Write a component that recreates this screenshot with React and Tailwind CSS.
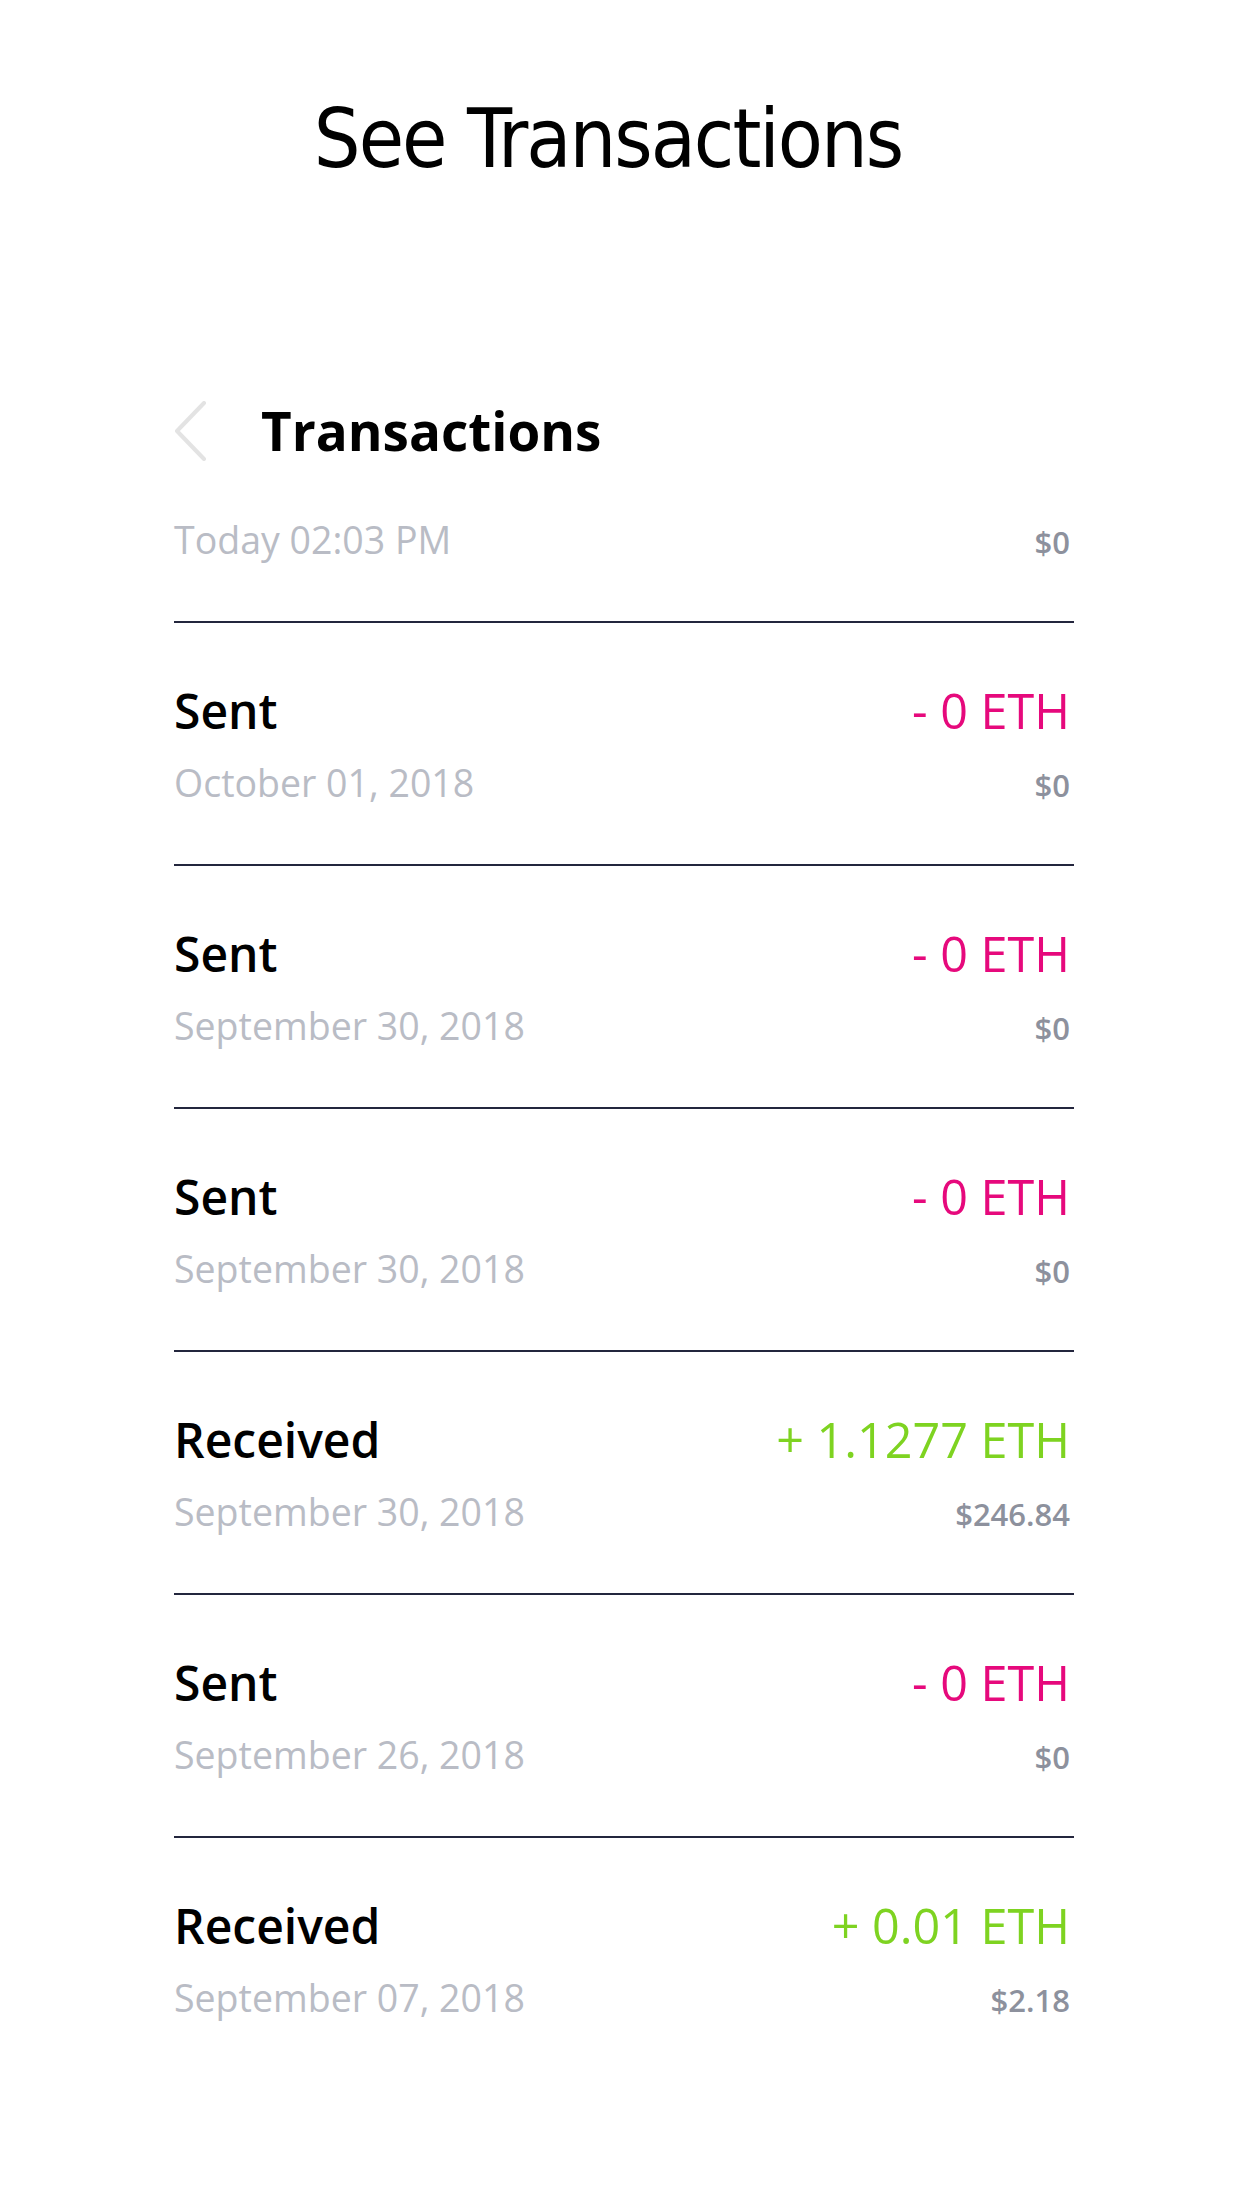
import React from "react";

const rows = [
  { title: "Sent", date: "October 01, 2018", amount: "- 0 ETH", usd: "$0", type: "sent" },
  { title: "Sent", date: "September 30, 2018", amount: "- 0 ETH", usd: "$0", type: "sent" },
  { title: "Sent", date: "September 30, 2018", amount: "- 0 ETH", usd: "$0", type: "sent" },
  { title: "Received", date: "September 30, 2018", amount: "+ 1.1277 ETH", usd: "$246.84", type: "recv" },
  { title: "Sent", date: "September 26, 2018", amount: "- 0 ETH", usd: "$0", type: "sent" },
  { title: "Received", date: "September 07, 2018", amount: "+ 0.01 ETH", usd: "$2.18", type: "recv", last: true },
];

function DateLine({ date, usd }) {
  return (
    <div className="flex items-baseline justify-between h-[46px] leading-[46px]">
      <span className="text-[37.5px] text-[#b9bcc5]">{date}</span>
      <span className="text-[31px] font-semibold text-[#8d919d] pr-[4px]">{usd}</span>
    </div>
  );
}

export default function App() {
  return (
    <div className="w-[1242px] min-h-[2208px] bg-white" style={{ fontFamily: '"Open Sans", "Noto Sans", sans-serif' }}>
      <div className="pt-[89px] flex justify-center pr-[26px]">
        <h1
          className="text-[82px] leading-[100px] text-black tracking-[-2px]"
          style={{ fontFamily: '"DejaVu Sans Condensed", "DejaVu Sans", sans-serif', fontStretch: "condensed" }}
        >
          See Transactions
        </h1>
      </div>

      <div className="pl-[174px] pr-[168px] pt-[206px]">
        <div className="flex items-center h-[72px]">
          <svg width="34" height="60" viewBox="0 0 34 60" className="ml-[-1px]" fill="none">
            <path d="M31 2 L4 30 L31 58" stroke="#e3e3e3" strokeWidth="4" strokeLinecap="round" strokeLinejoin="round" />
          </svg>
          <span className="ml-[54px] text-[53px] font-bold text-black leading-[72px]">Transactions</span>
        </div>

        <div className="pt-[50px] pb-[58px] border-b-2 border-[#23263d]">
          <DateLine date="Today 02:03 PM" usd="$0" />
        </div>

        {rows.map((r, i) => (
          <div
            key={i}
            className={r.last ? "pt-[57px]" : "pt-[57px] pb-[58px] border-b-2 border-[#23263d]"}
          >
            <div className="flex items-baseline justify-between h-[60px] leading-[60px]">
              <span className="text-[48px] font-semibold text-black">{r.title}</span>
              <span
                className={
                  r.type === "sent"
                    ? "text-[48.5px] font-medium text-[#e6097c] pr-[4px]"
                    : "text-[48.5px] font-medium text-[#7ed321] pr-[4px]"
                }
              >
                {r.amount}
              </span>
            </div>
            <div className="mt-[20px]">
              <DateLine date={r.date} usd={r.usd} />
            </div>
          </div>
        ))}
      </div>
    </div>
  );
}
